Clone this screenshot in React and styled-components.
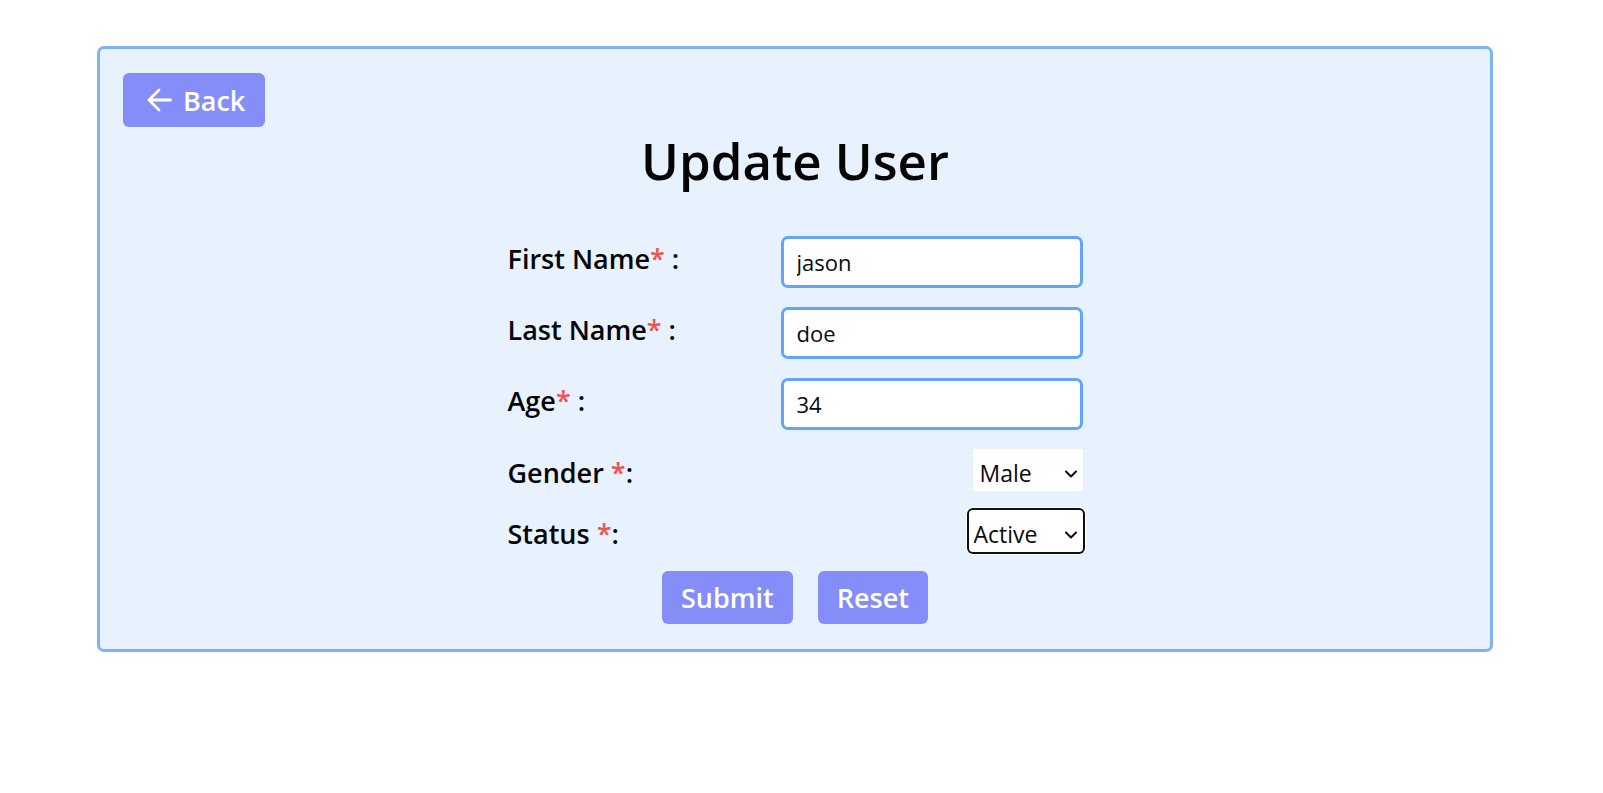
import React from "react";
import styled, { createGlobalStyle } from "styled-components";
import { ChevronDown } from "lucide-react";

const GlobalStyle = createGlobalStyle`
  html, body { margin: 0; padding: 0; background: #ffffff; }
  body { font-family: "Open Sans", "Noto Sans", sans-serif; color: #0a0a0a; }
  * { box-sizing: border-box; }
`;

const Page = styled.div`
  padding: 46px 0 0 97px;
`;

const Card = styled.div`
  width: 1396px;
  border: 3px solid #7fb1f8;
  border-radius: 7px;
  background: #e8f2ff;
  padding: 24px 23px 25px;
  display: flex;
  flex-direction: column;
`;

const BackButton = styled.button`
  align-self: flex-start;
  display: flex;
  align-items: center;
  gap: 11px;
  height: 54px;
  padding: 0 20px 0 24px;
  border: none;
  border-radius: 6px;
  background: #858ef8;
  color: #ffffff;
  font-family: inherit;
  font-size: 27px;
  font-weight: 600;
  cursor: pointer;
`;

const ArrowIcon = styled.svg`
  width: 25px;
  height: 24px;
  flex: none;
`;

const Title = styled.h1`
  margin: 3px 0 0;
  text-align: center;
  font-size: 51px;
  font-weight: 600;
  line-height: 1.2;
  color: #050505;
`;

const Form = styled.form`
  align-self: center;
  width: 575px;
  margin-top: 45px;
  display: flex;
  flex-direction: column;
  gap: 19px;
`;

const Row = styled.div`
  display: flex;
  justify-content: space-between;
  align-items: ${(p) => (p.$center ? "center" : "flex-start")};
`;

const Label = styled.label`
  padding-top: ${(p) => p.$offset || 0}px;
  font-size: 27px;
  font-weight: 600;
  line-height: 34px;
  color: #050505;
`;

const Star = styled.span`
  color: #f05252;
`;

const TextInput = styled.input`
  width: 302px;
  height: 52px;
  border: 3px solid #62a5fa;
  border-radius: 7px;
  background: #ffffff;
  padding: 0 13px;
  font-family: inherit;
  font-size: 22px;
  color: #0a0a0a;
  outline: none;
`;

const SelectWrap = styled.div`
  position: relative;
  display: flex;
  width: ${(p) => p.$width}px;
  height: 42px;
  border-radius: ${(p) => (p.$focused ? "4px" : "0")};
  background: #ffffff;
  box-shadow: ${(p) =>
    p.$focused ? "0 0 0 2px #101010, 0 0 0 3px #ffffff" : "none"};
`;

const Select = styled.select`
  appearance: none;
  width: 100%;
  height: 100%;
  border: none;
  background: transparent;
  padding: 6px 30px 0 ${(p) => p.$pad}px;
  font-family: inherit;
  font-size: 23px;
  color: #0a0a0a;
  outline: none;
`;

const Chevron = styled.span`
  position: absolute;
  right: 2px;
  top: 50%;
  transform: translateY(calc(-50% + 4px));
  display: flex;
  pointer-events: none;
  color: #111111;
`;

const Actions = styled.div`
  display: flex;
  justify-content: center;
  gap: 25px;
`;

const ActionButton = styled.button`
  height: 53px;
  padding: 0 ${(p) => p.$pad}px;
  border: none;
  border-radius: 6px;
  background: #858ef8;
  color: #ffffff;
  font-family: inherit;
  font-size: 27px;
  font-weight: 600;
  cursor: pointer;
`;

function Dropdown({ width, pad, focused, value, options }) {
  return (
    <SelectWrap $width={width} $focused={focused}>
      <Select $pad={pad} defaultValue={value}>
        {options.map((o) => (
          <option key={o}>{o}</option>
        ))}
      </Select>
      <Chevron>
        <ChevronDown size={20} strokeWidth={2.5} />
      </Chevron>
    </SelectWrap>
  );
}

export default function App() {
  return (
    <>
      <GlobalStyle />
      <Page>
        <Card>
          <BackButton type="button">
            <ArrowIcon viewBox="0 0 25 24" fill="none" stroke="currentColor" strokeWidth="2.8" strokeLinecap="round" strokeLinejoin="round">
              <path d="M23.5 12H2M12 2L2 12l10 10" />
            </ArrowIcon>
            Back
          </BackButton>
          <Title>Update User</Title>
          <Form onSubmit={(e) => e.preventDefault()}>
            <Row>
              <Label $offset={6}>
                First Name<Star>*</Star> :
              </Label>
              <TextInput defaultValue="jason" />
            </Row>
            <Row>
              <Label $offset={6}>
                Last Name<Star>*</Star> :
              </Label>
              <TextInput defaultValue="doe" />
            </Row>
            <Row>
              <Label $offset={6}>
                Age<Star>*</Star> :
              </Label>
              <TextInput defaultValue="34" />
            </Row>
            <Row $center>
              <Label $offset={5}>
                Gender <Star>*</Star>:
              </Label>
              <Dropdown width={110} pad={7} value="Male" options={["Male", "Female"]} />
            </Row>
            <Row $center>
              <Label $offset={5}>
                Status <Star>*</Star>:
              </Label>
              <Dropdown
                width={114}
                pad={5}
                focused
                value="Active"
                options={["Active", "Inactive"]}
              />
            </Row>
            <Actions>
              <ActionButton type="submit" $pad={19}>
                Submit
              </ActionButton>
              <ActionButton type="button" $pad={19}>
                Reset
              </ActionButton>
            </Actions>
          </Form>
        </Card>
      </Page>
    </>
  );
}
